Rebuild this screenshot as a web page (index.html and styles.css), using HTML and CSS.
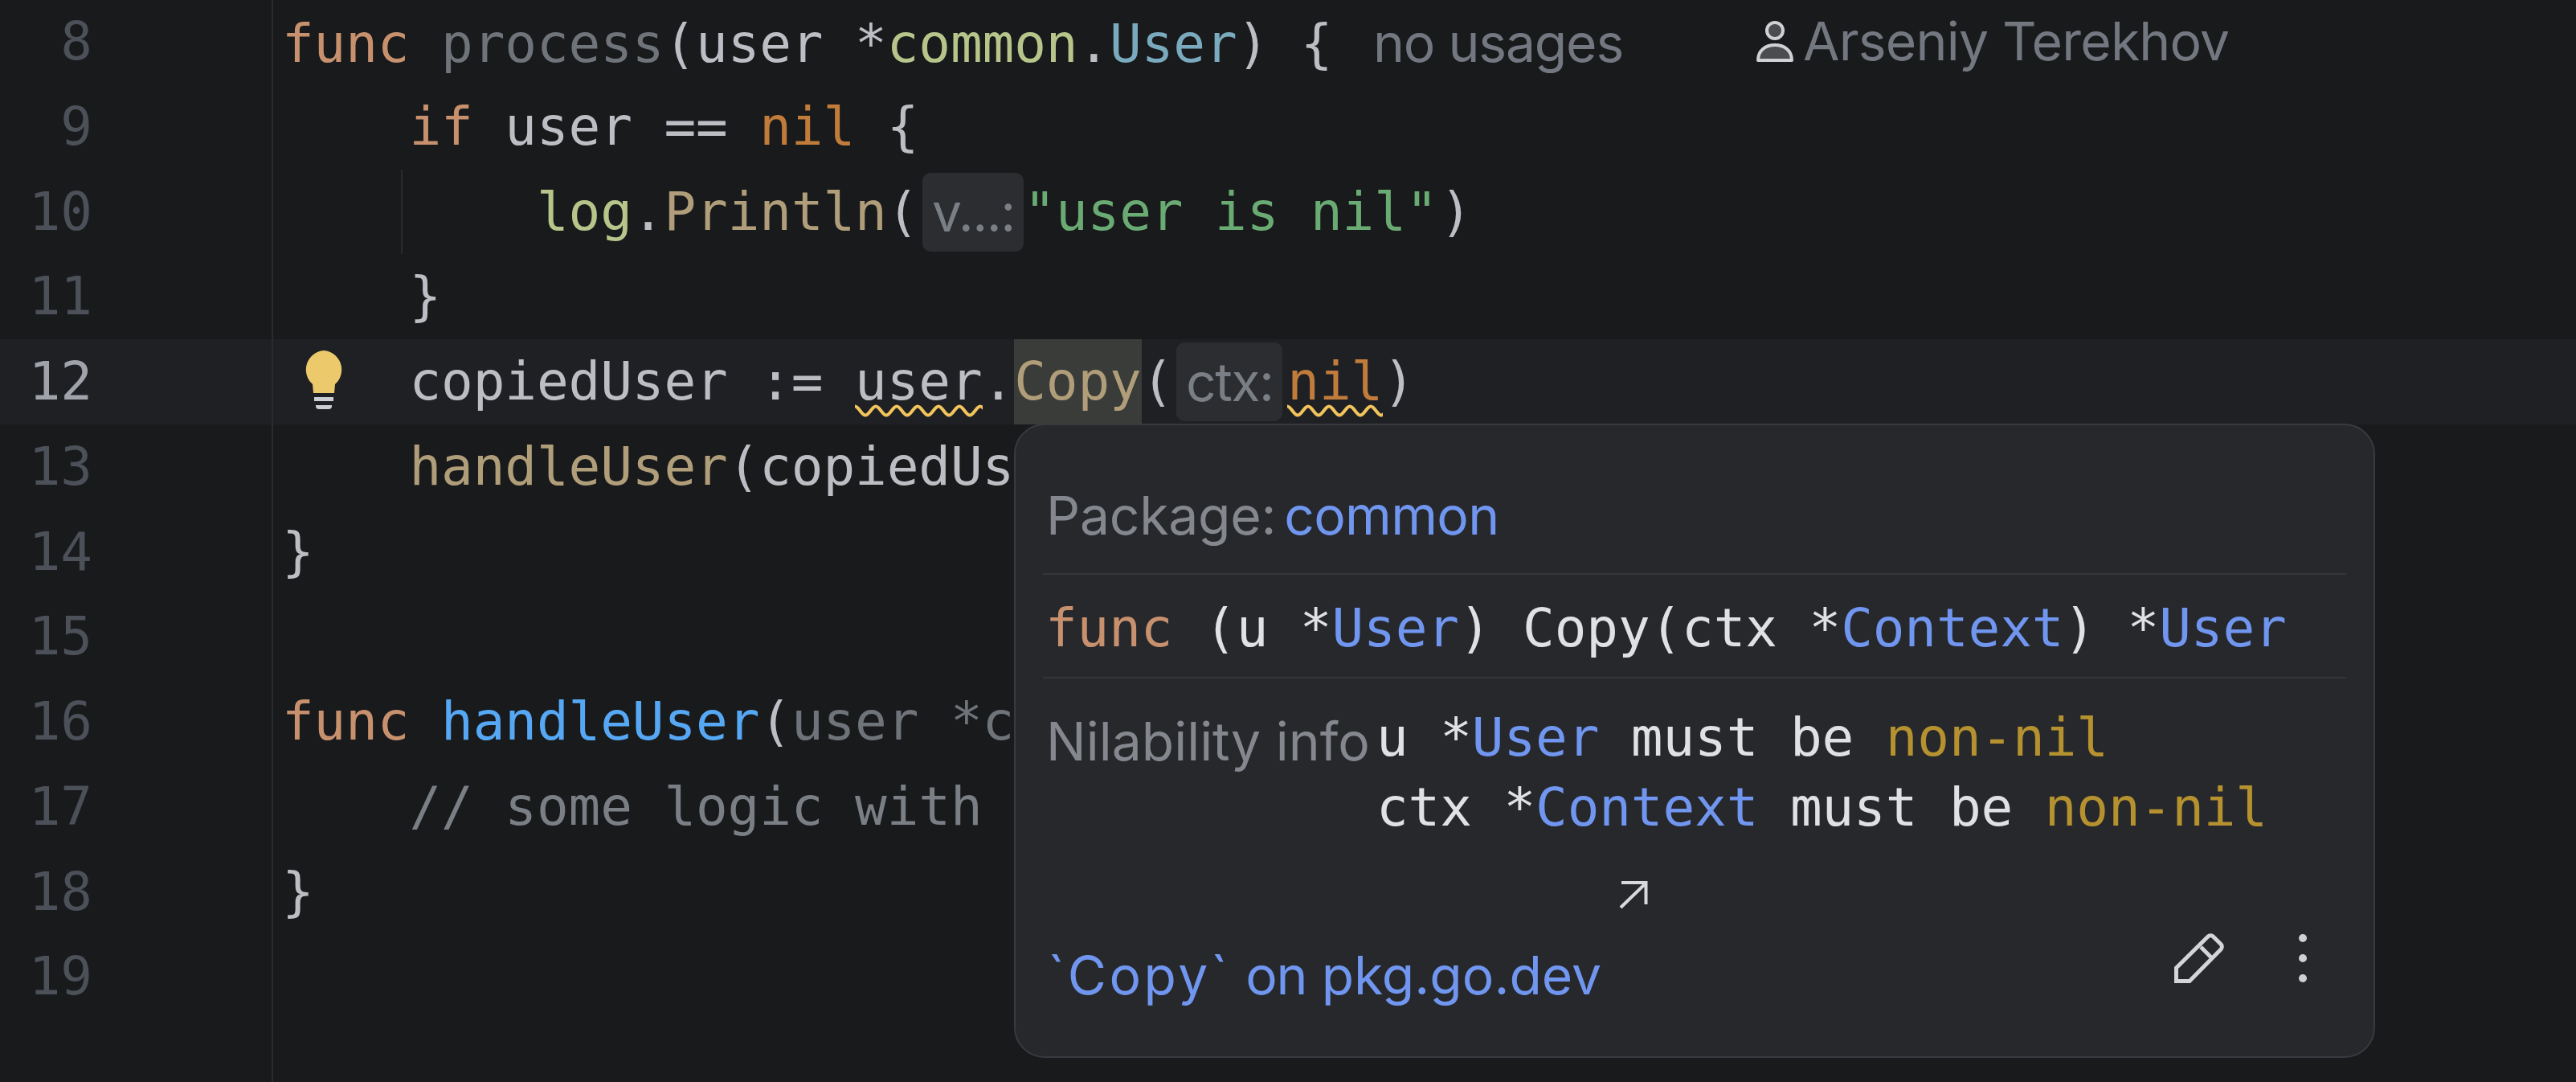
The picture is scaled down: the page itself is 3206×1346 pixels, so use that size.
FILE: index.html
```html
<!DOCTYPE html>
<html lang="en">
<head>
<meta charset="utf-8">
<title>Editor</title>
<link rel="stylesheet" href="styles.css">
</head>
<body>
<main class="editor">
  <div class="line"><div class="gutter"><span class="num">8</span></div><div class="code"><span class="kw">func</span> <span class="dim">process</span>(user *<span class="pkg">common</span>.<span class="type">User</span>) { <span class="meta usages">no usages</span><span class="meta author"><svg class="user-icon" viewBox="0 0 46 51"><circle cx="23" cy="12" r="10"/><path d="M2 49C2 37 11 30 23 30C35 30 44 37 44 49Z"/></svg>Arseniy Terekhov</span></div></div>
  <div class="line"><div class="gutter"><span class="num">9</span></div><div class="code">    <span class="kw">if</span> user == <span class="nil">nil</span> {</div></div>
  <div class="line"><div class="gutter"><span class="num">10</span></div><div class="code guide">        <span class="pkg">log</span>.<span class="fn">Println</span>(<span class="hint hint-v">v...:</span><span class="str">"user is nil"</span><span class="close">)</span></div></div>
  <div class="line"><div class="gutter"><span class="num">11</span></div><div class="code">    }</div></div>
  <div class="line current"><div class="gutter"><span class="num">12</span><svg class="bulb" viewBox="0 0 52 73"><path class="bulb-glass" d="M26 0A24 24 0 0 1 40 42L39 53H13L12 42A24 24 0 0 1 26 0Z"/><rect class="bulb-base" x="14" y="58" width="24" height="5"/><path class="bulb-base" d="M16 68H36V69A4 4 0 0 1 32 73H20A4 4 0 0 1 16 69Z"/></svg></div><div class="code">    copiedUser := <span class="warn">user</span>.<span class="fn mark">Copy</span>(<span class="hint hint-ctx">ctx:</span><span class="nil warn">nil</span>)</div></div>
  <div class="line"><div class="gutter"><span class="num">13</span></div><div class="code">    <span class="fn">handleUser</span>(copiedUser)</div></div>
  <div class="line"><div class="gutter"><span class="num">14</span></div><div class="code">}</div></div>
  <div class="line"><div class="gutter"><span class="num">15</span></div><div class="code"></div></div>
  <div class="line"><div class="gutter"><span class="num">16</span></div><div class="code"><span class="kw">func</span> <span class="decl">handleUser</span>(<span class="dim">user *common.User</span>) {</div></div>
  <div class="line"><div class="gutter"><span class="num">17</span></div><div class="code">    <span class="comment">// some logic with user</span></div></div>
  <div class="line"><div class="gutter"><span class="num">18</span></div><div class="code">}</div></div>
  <div class="line"><div class="gutter"><span class="num">19</span></div><div class="code"></div></div>
  <div class="line"><div class="gutter"></div><div class="code"></div></div>

  <aside class="popup">
    <div class="pop-pkg"><span class="label label-pkg">Package:</span><a class="link link-pkg">common</a></div>
    <div class="pop-sig"><span class="kw">func</span> (u *<span class="ref">User</span>) Copy(ctx *<span class="ref">Context</span>) *<span class="ref">User</span></div>
    <div class="pop-nil">
      <span class="label label-nil">Nilability info</span>
      <div class="nil-lines">
        <div class="nil-line">u *<span class="ref">User</span> must be <span class="warn-word">non-nil</span></div>
        <div class="nil-line">ctx *<span class="ref">Context</span> must be <span class="warn-word">non-nil</span></div>
      </div>
    </div>
    <svg class="ext" viewBox="0 0 36 36"><path d="M3 2H33.5V29M33 3L2 33"/></svg>
    <div class="pop-foot">
      <a class="link foot-link"><span class="tick">`Copy`</span> <span class="tight">on</span> pkg.go.dev</a>
      <div class="tools">
        <svg class="pen" viewBox="0 0 63 63"><path d="M2.5 60.5V44L42 5a4.5 4.5 0 0 1 6.4 0L58 14.6a4.5 4.5 0 0 1 0 6.4L19 60.5Z"/><path d="M33 18L47 32"/></svg>
        <svg class="dots" viewBox="0 0 10 60"><circle cx="5" cy="5" r="5"/><circle cx="5" cy="30" r="5"/><circle cx="5" cy="55" r="5"/></svg>
      </div>
    </div>
  </aside>
</main>
</body>
</html>
```

FILE: styles.css
```css
* { box-sizing: border-box; }
html, body { margin: 0; height: 100%; background: #191a1c; }
body { overflow: hidden; }

.editor {
  position: relative;
  height: 100%;
  overflow: hidden;
  font-family: "DejaVu Sans Mono", "Liberation Mono", monospace;
  font-size: 66px;
  color: #bcbec4;
}

.line { display: flex; height: 105.75px; line-height: 105.75px; position: relative; top: -1px; }
.current { background: #1f2024; }

.gutter {
  position: relative;
  flex: 0 0 340px;
  display: flex;
  border-right: 2px solid #2a2b2e;
  color: #4b5059;
}
.current .gutter { color: #a1a3ab; }
.num { width: 115px; text-align: right; letter-spacing: -0.1px; }

.bulb { position: absolute; left: 377px; top: 14px; width: 52px; height: 73px; }
.bulb-glass { fill: #ecc96b; }
.bulb-base { fill: #cdced3; }

.code {
  flex: 1;
  padding-left: 11px;
  white-space: pre;
  letter-spacing: -0.12px;
}
.guide { position: relative; }
.guide::before {
  content: "";
  position: absolute;
  left: 159px;
  top: 0;
  bottom: 0;
  width: 2px;
  background: #2a2b2e;
}

.kw { color: #c8916e; }
.dim { color: #6f737a; }
.pkg { color: #b7c48a; }
.type { color: #7aaabd; }
.nil { color: #c17c3c; }
.fn { color: #b09d79; }
.str { color: #6aab73; }
.close { margin-left: 3px; }
.decl { color: #56a8f5; }
.comment { color: #7a7e85; }

.meta { font-family: "Inter", sans-serif; letter-spacing: -1.2px; color: #737780; }
.usages { margin-left: 11px; }
.author { margin-left: 166px; display: inline-flex; align-items: center; gap: 12px; letter-spacing: -0.8px; }
.user-icon { width: 46px; height: 51px; fill: #4a4c50; stroke: #d0d1d5; stroke-width: 4; stroke-linejoin: round; }

.hint {
  display: inline-block;
  height: 98px;
  line-height: 98px;
  vertical-align: top;
  border-radius: 10px;
  background: #2b2d30;
  color: #7a7e85;
  font-family: "Inter", sans-serif;
  font-size: 66px;
  letter-spacing: -1.5px;
  text-align: center;
}
.hint-v { width: 126px; margin: 4px 0 0 5px; }
.hint-ctx { width: 132px; margin: 4px 6px 0 4px; }

.mark {
  display: inline-block;
  height: 105.75px;
  background: #3a3c3a;
}

.warn {
  display: inline-block;
  height: 105.75px;
  background-image: url("data:image/svg+xml,%3Csvg xmlns='http://www.w3.org/2000/svg' width='26' height='16'%3E%3Cpath d='M0 2.5C5 2.5 8 13.5 13 13.5S21 2.5 26 2.5' fill='none' stroke='%23f2c55c' stroke-width='4'/%3E%3C/svg%3E");
  background-repeat: repeat-x;
  background-position: 0 81px;
  background-size: 26px 16px;
}

.popup {
  position: absolute;
  left: 1262px;
  top: 527px;
  width: 1694px;
  height: 789px;
  padding: 0 34px;
  background: #27282c;
  border: 2px solid #393a3f;
  border-radius: 38px;
  color: #dfe1e5;
  letter-spacing: -0.13px;
}

.label { font-family: "Inter", sans-serif; color: #85878e; }
.link { font-family: "Inter", sans-serif; color: #7096f0; }
.label-pkg { letter-spacing: -0.25px; margin-right: 10px; }
.link-pkg { letter-spacing: -0.7px; }
.label-nil { width: 411px; flex: none; padding-top: 5px; letter-spacing: 0; }
.ref { color: #7096f0; }
.warn-word { color: #b5922f; }

.pop-pkg {
  height: 186px;
  padding: 72px 0 0 4px;
  line-height: 80px;
  border-bottom: 2px solid #35363a;
  white-space: pre;
}
.pop-sig {
  height: 129px;
  padding: 5px 0 0 3px;
  line-height: 124px;
  border-bottom: 2px solid #35363a;
  white-space: pre;
}
.pop-nil { display: flex; padding: 30px 0 0 4px; }
.label-nil { line-height: 87px; white-space: nowrap; }
.nil-lines { line-height: 87px; }
.nil-line { white-space: pre; }
.ext {
  display: block;
  width: 36px;
  height: 36px;
  margin: 48px 0 0 717px;
  fill: none;
  stroke: #d8d9dc;
  stroke-width: 4;
}
.pop-foot { display: flex; justify-content: space-between; align-items: flex-start; padding-left: 6px; margin-top: 28px; }
.foot-link { line-height: 80px; margin-top: 13px; letter-spacing: 0; }
.tick { letter-spacing: 3.5px; }
.tight { letter-spacing: -1.3px; }
.tools { display: flex; gap: 92px; margin-right: 49px; align-items: center; }
.pen { width: 63px; height: 63px; fill: none; stroke: #d4d5d8; stroke-width: 5; }
.dots { width: 10px; height: 60px; fill: #cfd0d4; }
```
